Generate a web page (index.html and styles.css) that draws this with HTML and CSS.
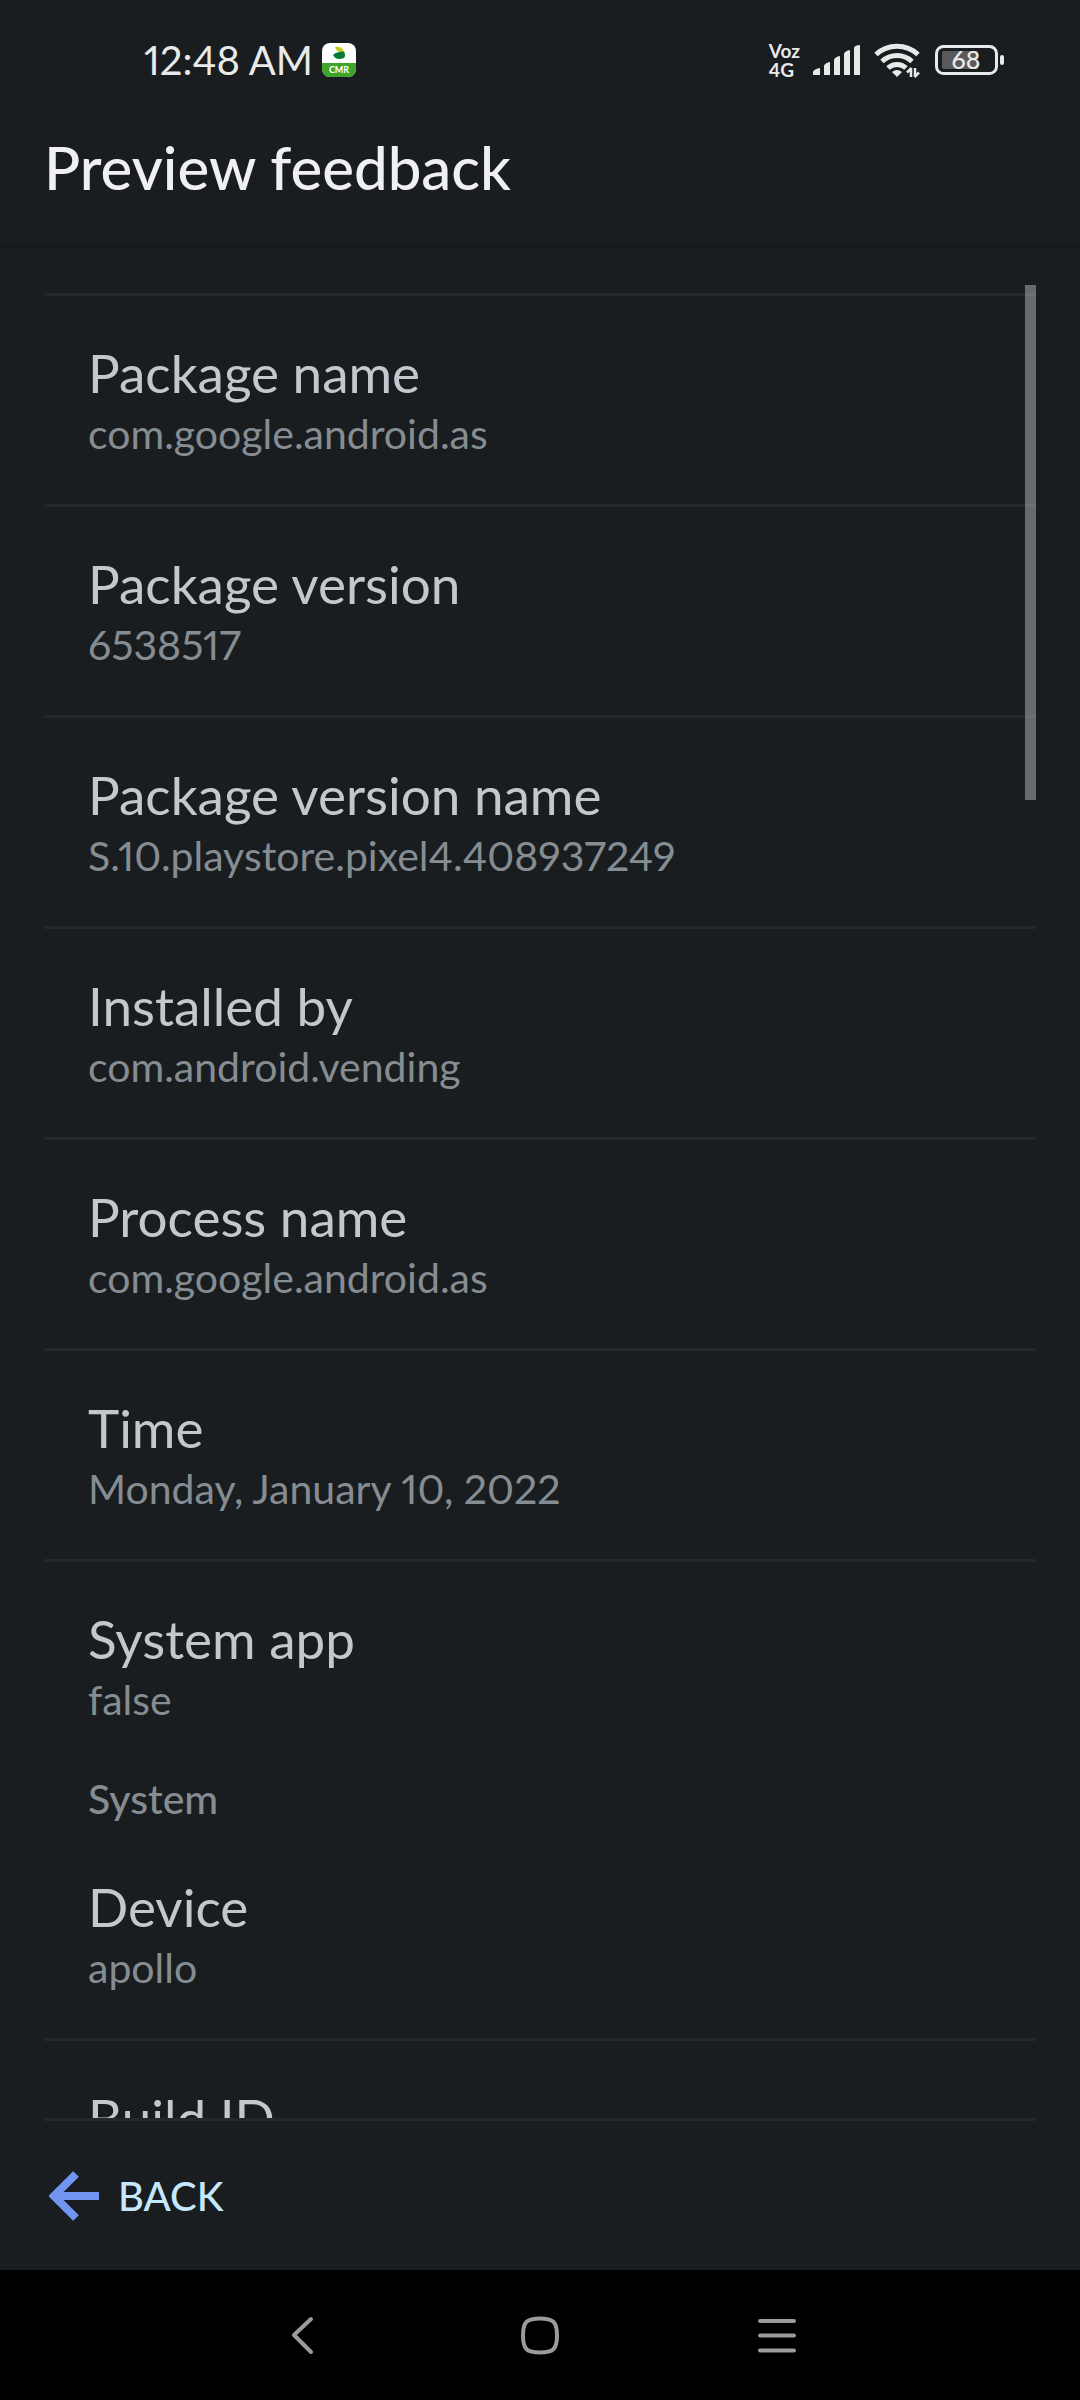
FILE: index.html
```
<!DOCTYPE html>
<html lang="en">
<head>
    <meta charset="UTF-8">
    <meta name="viewport" content="width=device-width, initial-scale=1.0">
    <title>Preview feedback</title>
    <link rel="stylesheet" href="styles.css">
</head>
<body>

    <!-- Status Bar -->
    <div class="status-bar">
        <div class="status-left">
            <span class="clock">12:48 AM</span>
            <svg class="app-icon" width="34" height="34" viewBox="0 0 34 34">
                <rect width="34" height="34" rx="8" fill="#fff"/>
                <path d="M0 20h34v6a8 8 0 0 1-8 8H8a8 8 0 0 1-8-8z" fill="#3fa52a"/>
                <path d="M13 4q7-1.500 9 5q-8 1-9-5z" fill="#c3cf1c"/>
                <path d="M11 12q3-3.500 11-3.500q2 4 0 6.500q-8 3-11-3z" fill="#047a35"/>
                <text x="17" y="30" class="app-icon-text">CMR</text>
            </svg>
        </div>
        <div class="status-right">
            <div class="network">
                <span>Voz</span>
                <span>4G</span>
            </div>
            <svg width="48" height="32" viewBox="0 0 48 32" fill="#e8eaea">
                <path d="M0 31v-3q0-2 6-4q1 0 1 1v6z"/>
                <path d="M11 31V22q0-2 5-4q1 0 1 1v12z"/>
                <path d="M21 31V16q0-2 5-4q1 0 1 1v18z"/>
                <path d="M31 31V10q0-2 5-4q1 0 1 1v24z"/>
                <path d="M41 31V4q0-2 5-3q1 0 1 1v29z"/>
            </svg>
            <svg width="48" height="36" viewBox="0 0 48 36" fill="none" stroke="#e8eaea" stroke-width="5">
                <path d="M2 12.500a31 31 0 0 1 42 0"/>
                <path d="M8 19.500a22 22 0 0 1 30 0"/>
                <path d="M14 26a13 13 0 0 1 18 0"/>
                <path d="M18 30q5-4 10 0l-5 5z" fill="#e8eaea" stroke="none"/>
                <path d="M37 26v9M37.500 26l-4.500 4.500M41 35v-9M40.500 35l4.500-4.500" stroke-width="2.500"/>
            </svg>
            <svg class="battery" width="70" height="30" viewBox="0 0 70 30">
                <rect x="1.500" y="1.500" width="60" height="27" rx="7" fill="none" stroke="#e8eaea" stroke-width="3"/>
                <path d="M9 6h34v18H9q-2 0-2-2V8q0-2 2-2z" fill="#59595b"/>
                <rect x="65" y="10" width="4" height="10" rx="2" fill="#e8eaea"/>
                <text x="31" y="24" class="battery-text">68</text>
            </svg>
        </div>
    </div>

    <!-- Title -->
    <header class="header">
        <h1>Preview feedback</h1>
    </header>

    <!-- Feedback Details -->
    <main class="content">
        <div class="scrollbar"></div>
        <dl class="list">
            <div class="item">
                <dt>Package name</dt>
                <dd>com.google.android.as</dd>
            </div>
            <div class="item">
                <dt>Package version</dt>
                <dd>6538517</dd>
            </div>
            <div class="item">
                <dt>Package version name</dt>
                <dd>S.10.playstore.pixel4.408937249</dd>
            </div>
            <div class="item">
                <dt>Installed by</dt>
                <dd>com.android.vending</dd>
            </div>
            <div class="item">
                <dt>Process name</dt>
                <dd>com.google.android.as</dd>
            </div>
            <div class="item">
                <dt>Time</dt>
                <dd>Monday, January 10, 2022</dd>
            </div>
            <div class="item">
                <dt>System app</dt>
                <dd>false</dd>
            </div>
        </dl>
        <h2>System</h2>
        <dl class="list">
            <div class="item first">
                <dt>Device</dt>
                <dd>apollo</dd>
            </div>
            <div class="item">
                <dt>Build ID</dt>
            </div>
        </dl>
    </main>

    <!-- Back Button -->
    <footer class="footer">
        <button class="back" type="button">
            <svg width="51" height="50" viewBox="0 0 51 50" fill="none" stroke="#7195f0" stroke-width="8">
                <path d="M27 3L5 25l22 22M5 25h45"/>
            </svg>
            BACK
        </button>
    </footer>

    <!-- System Navigation -->
    <nav class="nav-bar">
        <button type="button" aria-label="Back">
            <svg width="40" height="40" viewBox="0 0 40 40">
                <path d="M28 4L11 20l17 17"/>
            </svg>
        </button>
        <button type="button" aria-label="Home">
            <svg width="40" height="40" viewBox="0 0 40 40">
                <path d="M20 3.500c13 0 17 3 17 17s-4 17-17 17s-17-3-17-17s4-17 17-17z"/>
            </svg>
        </button>
        <button type="button" aria-label="Recent apps">
            <svg width="40" height="40" viewBox="0 0 40 40">
                <path d="M3 6h34M3 20.500h34M3 35.500h34"/>
            </svg>
        </button>
    </nav>

</body>
</html>
```
FILE: styles.css
```
* {
    margin: 0;
    padding: 0;
    box-sizing: border-box;
}

body {
    display: flex;
    flex-direction: column;
    height: 100vh;
    font-family: Lato, sans-serif;
    font-variant-numeric: proportional-nums;
    background-color: #191d20;
    color: #c2c9ce;
    overflow: hidden;
}

button {
    border: none;
    background: none;
    font: inherit;
    cursor: pointer;
}

/* Status Bar */
.status-bar {
    display: flex;
    justify-content: space-between;
    align-items: center;
    height: 120px;
    padding: 0 75px 0 144px;
    color: #e8eaea;
}

.status-left,
.status-right {
    display: flex;
    align-items: center;
}

.status-left {
    gap: 9px;
}

.status-right {
    gap: 13px;
}

.clock {
    font-size: 40px;
}

.app-icon-text {
    font-size: 9px;
    font-weight: 700;
    fill: #fff;
    text-anchor: middle;
}

.network {
    display: flex;
    flex-direction: column;
    font-size: 19px;
    font-weight: 700;
    line-height: 19px;
}

.battery-text {
    font-size: 25px;
    font-weight: 500;
    fill: #e8eaea;
    text-anchor: middle;
}

/* Title */
.header {
    height: 124px;
    padding: 15px 44px;
    box-shadow: 0 3px 6px rgba(0, 0, 0, 0.1);
}

h1 {
    font-size: 60px;
    font-weight: 500;
    line-height: 64px;
    color: #f0f0f3;
}

/* Feedback Details */
.content {
    position: relative;
    flex: 1;
    min-height: 0;
    padding: 49px 44px 0;
    overflow: hidden;
}

.scrollbar {
    position: absolute;
    top: 41px;
    right: 44px;
    width: 11px;
    height: 515px;
    background-color: rgba(180, 186, 190, 0.5);
}

.item {
    padding: 44px 44px 42px;
    border-top: 3px solid #24282b;
}

.item.first {
    border-top-color: transparent;
}

dt {
    font-size: 53px;
    line-height: 66px;
}

dd {
    font-size: 41px;
    line-height: 56px;
    color: #868d92;
}

h2 {
    padding: 1px 44px 0;
    font-size: 41px;
    font-weight: 500;
    line-height: 56px;
    color: #868d92;
}

/* Back Button */
.footer {
    height: 152px;
    margin-left: 44px;
    margin-right: 44px;
    border-top: 3px solid #24282b;
}

.back {
    display: flex;
    align-items: center;
    gap: 18px;
    height: 100%;
    padding: 0 5px;
    font-size: 40px;
    font-weight: 500;
    color: #c5e8ff;
}

/* System Navigation */
.nav-bar {
    display: flex;
    justify-content: center;
    align-items: center;
    gap: 197px;
    height: 130px;
    background-color: #000;
}

.nav-bar svg {
    display: block;
    fill: none;
    stroke: #9b9b9b;
    stroke-width: 4;
    stroke-linecap: round;
    stroke-linejoin: round;
}
```
